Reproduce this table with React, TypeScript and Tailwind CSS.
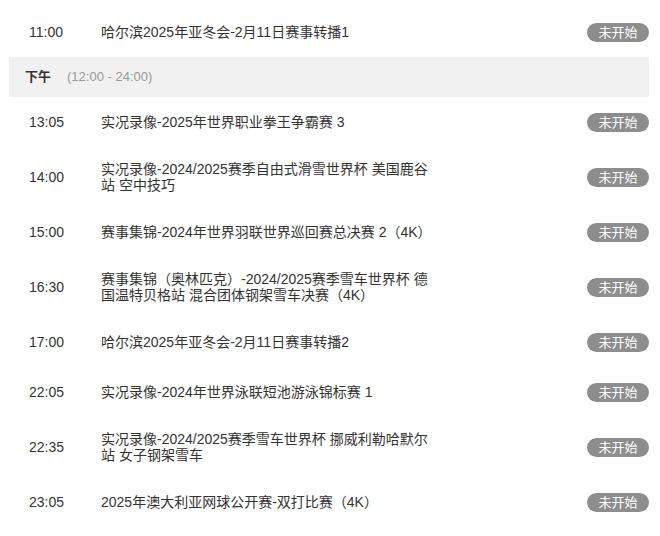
const morning = [{ time: '11:00', title: '哈尔滨2025年亚冬会-2月11日赛事转播1' }]

const afternoon = [
    { time: '13:05', title: '实况录像-2025年世界职业拳王争霸赛 3' },
    { time: '14:00', title: '实况录像-2024/2025赛季自由式滑雪世界杯 美国鹿谷站 空中技巧' },
    { time: '15:00', title: '赛事集锦-2024年世界羽联世界巡回赛总决赛 2（4K）' },
    { time: '16:30', title: '赛事集锦（奥林匹克）-2024/2025赛季雪车世界杯 德国温特贝格站 混合团体钢架雪车决赛（4K）' },
    { time: '17:00', title: '哈尔滨2025年亚冬会-2月11日赛事转播2' },
    { time: '22:05', title: '实况录像-2024年世界泳联短池游泳锦标赛 1' },
    { time: '22:35', title: '实况录像-2024/2025赛季雪车世界杯 挪威利勒哈默尔站 女子钢架雪车' },
    { time: '23:05', title: '2025年澳大利亚网球公开赛-双打比赛（4K）' },
]

interface RowProps {
    time: string
    title: string
}

const Row = ({ time, title }: RowProps) => (
    <div className="flex items-center min-h-[50px] py-[14px]">
        <span className="w-[92px] shrink-0 pl-[20px] text-[14px] text-[#333]">{time}</span>
        <p className="w-[330px] text-[14px] leading-[16px] text-[#333]">{title}</p>
        <span className="ml-auto w-[62px] h-[19px] rounded-full bg-[#8d8d8d] text-white text-[13px] leading-[19px] text-center">
            未开始
        </span>
    </div>
)

export default function App() {
    return (
        <div className="w-[660px] h-[536px] overflow-hidden bg-white pt-[7px] pl-[9px] pr-[11px] font-['Liberation_Sans','Noto_Sans_CJK_SC',sans-serif]">
            {morning.map((r) => (
                <Row key={r.time} {...r} />
            ))}

            {/* 下午 */}
            <div className="flex items-center h-[40px] bg-[#f1f1f1] pl-[16px]">
                <span className="text-[13px] font-bold text-[#333]">下午</span>
                <span className="ml-[16px] text-[13px] text-[#999]">(12:00 - 24:00)</span>
            </div>

            {afternoon.map((r) => (
                <Row key={r.time} {...r} />
            ))}
        </div>
    )
}
